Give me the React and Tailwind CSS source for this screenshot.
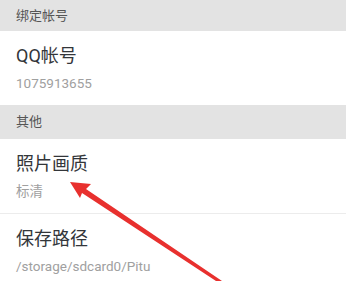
import React from "react";

function Section({ label, tall }) {
  return (
    <div className={(tall ? "h-[34px]" : "h-[31px]") + " flex items-center px-4 bg-[#e3e3e3] text-[13px] text-[#555]"}>
      {label}
    </div>
  );
}

function Row({ title, sub, divider }) {
  return (
    <div className={"bg-white px-4 pt-[13px] pb-[13px] " + (divider ? "border-b border-[#ececec]" : "")}>
      <div className="text-[18px] leading-[24px] text-[#33363a]">{title}</div>
      <div className="mt-[6px] text-[13.5px] leading-[18px] text-[#a0a0a0]">{sub}</div>
    </div>
  );
}

export default function App() {
  return (
    <div
      className="relative w-[346px] h-[281px] overflow-hidden bg-white"
      style={{ fontFamily: '"Roboto", "Noto Sans CJK SC", sans-serif' }}
    >
      <Section label="绑定帐号" />
      <Row title="QQ帐号" sub="1075913655" />
      <Section label="其他" tall />
      <Row title="照片画质" sub="标清" divider />
      <Row title="保存路径" sub="/storage/sdcard0/Pitu" />

      <svg className="absolute left-0 top-0" width="346" height="281" viewBox="0 0 346 281">
        <polygon points="70,182 91,184 86,189 222,281 216,281 82,193 80,198" fill="#e8302e" />
      </svg>
    </div>
  );
}
